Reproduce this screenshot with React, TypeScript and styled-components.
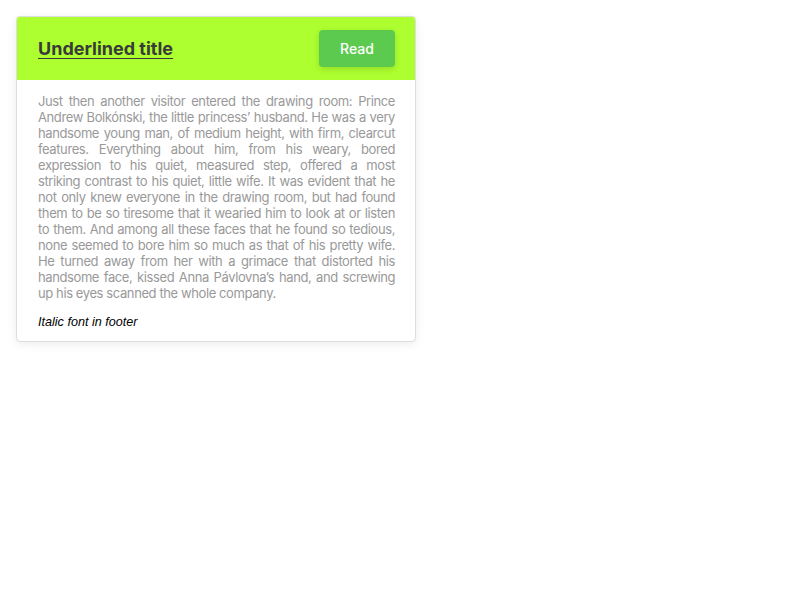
import React from "react";
import styled, { createGlobalStyle } from "styled-components";

const Global = createGlobalStyle`
  html, body { margin: 0; padding: 0; background: #fff; }
  body { font-family: Inter, "Noto Sans", sans-serif; }
`;

const Page = styled.div`
  padding: 16px;
`;

const Card = styled.article`
  width: 400px;
  box-sizing: border-box;
  border: 1px solid #dedede;
  border-radius: 4px;
  overflow: hidden;
  background: #fff;
  box-shadow: 0 2px 10px rgba(0, 0, 0, 0.08);
`;

const Header = styled.header`
  height: 63px;
  background: #adff2f;
  display: flex;
  align-items: center;
  justify-content: space-between;
  padding: 0 20px 0 21px;
`;

const Title = styled.h2`
  margin: 0;
  font-family: Inter, sans-serif;
  font-size: 18px;
  font-weight: 700;
  color: #3a3a3a;
  text-decoration: underline;
  text-underline-offset: 3px;
`;

const Button = styled.button`
  width: 76px;
  height: 37px;
  border: none;
  border-radius: 4px;
  background: #5cca4e;
  color: #fff;
  font-family: Inter, sans-serif;
  font-size: 14px;
  font-weight: 500;
  box-shadow: 0 2px 6px rgba(0, 0, 0, 0.15);
  cursor: pointer;
`;

const Body = styled.div`
  padding: 13px 20px 0 21px;
  font-family: Inter, sans-serif;
  font-size: 13px;
  line-height: 16px;
  letter-spacing: -0.4px;
  color: #999;
  text-align: justify;
`;

const Footer = styled.footer`
  padding: 14px 21px 11px;
  font-family: "Liberation Sans", Arial, sans-serif;
  font-style: italic;
  font-size: 12.6px;
  line-height: 15px;
  color: #000;
`;

const text =
  "Just then another visitor entered the drawing room: Prince Andrew Bolkónski, the little princess’ husband. He was a very handsome young man, of medium height, with firm, clearcut features. Everything about him, from his weary, bored expression to his quiet, measured step, offered a most striking contrast to his quiet, little wife. It was evident that he not only knew everyone in the drawing room, but had found them to be so tiresome that it wearied him to look at or listen to them. And among all these faces that he found so tedious, none seemed to bore him so much as that of his pretty wife. He turned away from her with a grimace that distorted his handsome face, kissed Anna Pávlovna’s hand, and screwing up his eyes scanned the whole company.";

export default function App() {
  return (
    <Page>
      <Global />
      <Card>
        <Header>
          <Title>Underlined title</Title>
          <Button>Read</Button>
        </Header>
        <Body>{text}</Body>
        <Footer>Italic font in footer</Footer>
      </Card>
    </Page>
  );
}
